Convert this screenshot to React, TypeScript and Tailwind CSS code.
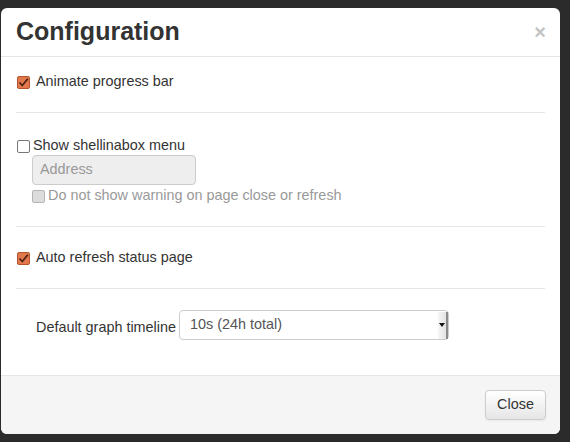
import React from "react"

const CheckedBox = () => (
  <span className="w-[13px] h-[13px] rounded-[2px] border border-[#b4532c] bg-[#e3784c] flex items-center justify-center shrink-0">
    <svg width="11" height="11" viewBox="0 0 11 11">
      <path d="M1.5 5.5 L4.3 8.5 L9.8 1.8" fill="none" stroke="#4a2414" strokeWidth="1.8" />
    </svg>
  </span>
)

const EmptyBox = ({ disabled }: { disabled?: boolean }) => (
  <span
    className={`w-[13px] h-[13px] rounded-[2px] border shrink-0 ${
      disabled ? "border-[#b5b5b5] bg-[#dcdcdc]" : "border-[#767676] bg-white"
    }`}
  />
)

const Hr = () => <div className="h-px bg-[#e5e5e5]" />

export default function App() {
  return (
    <div
      className="bg-[#2b2b2b] w-[570px] h-[442px] pt-[8px] pl-px text-[#333] text-[14.4px]"
      style={{ fontFamily: '"Liberation Sans", Arial, sans-serif' }}
    >
      <div className="w-[559px] h-[426px] bg-white rounded-[6px] flex flex-col overflow-hidden">
        {/* header */}
        <div className="h-[49px] border-b border-[#e5e5e5] flex items-center justify-between pl-[15px] pr-[14px] shrink-0">
          <h3 className="text-[25px] font-bold leading-none text-[#333] mb-[2px]">Configuration</h3>
          <span className="text-[20px] font-bold text-[#c4c4c4] leading-none">×</span>
        </div>

        {/* body */}
        <div className="px-[15px] flex-1">
          <div className="pt-[15px] pb-[20px]">
            <label className="flex items-center h-[20px] pl-[1px]">
              <CheckedBox />
              <span className="ml-[6px]">Animate progress bar</span>
            </label>
          </div>
          <Hr />
          <div className="pt-[23px] pb-[20px]">
            <label className="flex items-center h-[20px] pl-[1px]">
              <EmptyBox />
              <span className="ml-[3px]">Show shellinabox menu</span>
            </label>
            <div className="pl-[16px] mt-[-1px]">
              <div className="w-[164px] h-[30px] rounded-[4px] border border-[#cccccc] bg-[#eeeeee] flex items-center px-[7px] text-[#999]">
                Address
              </div>
              <label className="flex items-center h-[20px] mt-[1px] text-[#999]">
                <EmptyBox disabled />
                <span className="ml-[3px]">Do not show warning on page close or refresh</span>
              </label>
            </div>
          </div>
          <Hr />
          <div className="pt-[21px] pb-[20px]">
            <label className="flex items-center h-[20px] pl-[1px]">
              <CheckedBox />
              <span className="ml-[6px]">Auto refresh status page</span>
            </label>
          </div>
          <Hr />
          <div className="pt-[21px] pl-[20px] flex items-center">
            <span className="w-[143px] mt-[6px] whitespace-nowrap">Default graph timeline</span>
            <div className="w-[270px] h-[30px] rounded-[4px] border border-[#cccccc] bg-white flex items-center justify-between pl-[10px] text-[#555]">
              <span>10s (24h total)</span>
              <span className="w-[10px] h-[27px] bg-gradient-to-r from-[#f7f7f7] to-[#e3e3e3] border-r-2 border-[#8a8a8a] flex items-center justify-center">
                <svg width="6" height="4" viewBox="0 0 6 4">
                  <path d="M0 0 H6 L3 4 Z" fill="#111" />
                </svg>
              </span>
            </div>
          </div>
        </div>

        {/* footer */}
        <div className="h-[59px] border-t border-[#e5e5e5] bg-[#f5f5f5] flex items-center justify-end pr-[14px] shrink-0">
          <button className="w-[61px] h-[30px] rounded-[4px] border border-[#cccccc] bg-gradient-to-b from-white to-[#e6e6e6] text-[#333] shadow-[0_1px_2px_rgba(0,0,0,0.05)]">
            Close
          </button>
        </div>
      </div>
    </div>
  )
}
